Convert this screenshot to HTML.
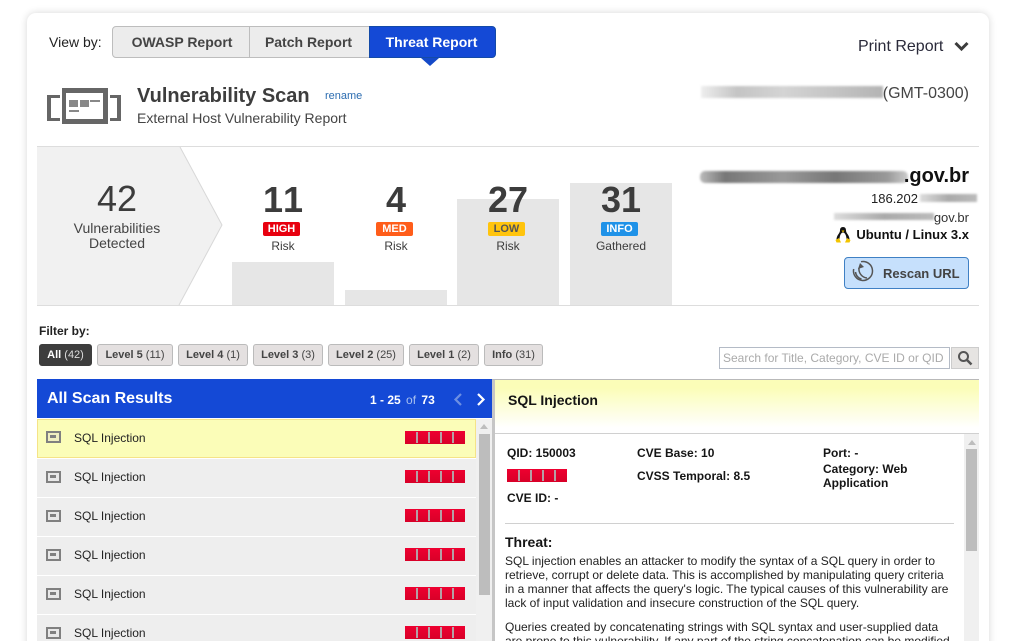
<!DOCTYPE html>
<html><head><meta charset="utf-8">
<style>
*{box-sizing:border-box}
html,body{margin:0;padding:0;width:1028px;height:641px;overflow:hidden;background:#fff;font-family:"Liberation Sans",sans-serif;color:#3c3c3c}
#wrap{position:relative;width:1028px;height:641px;overflow:hidden;background:#fff}
.a{position:absolute}
.t{position:absolute;white-space:nowrap;line-height:14px}
#card{left:27px;top:13px;width:962px;height:660px;background:#fff;border-radius:9px;box-shadow:0 0 8px rgba(0,0,0,.16)}
.tab{position:absolute;top:26px;height:32px;line-height:30px;text-align:center;font-weight:bold;font-size:14px;background:#ececec;border:1px solid #bdbdbd;color:#444}
.num{position:absolute;font-weight:bold;font-size:36px;line-height:40px;width:100px;text-align:center;top:180px;font-kerning:none}
.badge{position:absolute;top:222px;width:37px;height:14px;border-radius:2px;font-size:11px;font-weight:bold;line-height:14px;text-align:center;color:#fff}
.lbl{position:absolute;top:239px;width:100px;text-align:center;font-size:12px;line-height:14px}
.bar{position:absolute;background:#e6e6e6}
.pill{position:absolute;top:344px;height:22px;line-height:20px;border:1px solid #bbb;border-radius:3px;background:#e4e0e0;font-size:11px;text-align:center;color:#444}
.pill b{font-weight:bold}
.row{position:absolute;left:37px;width:439px;height:38px;background:#eeeeee}
.row span{position:absolute;left:37px;top:11px;font-size:12px;line-height:14px;color:#222}
.ic{position:absolute;left:9px;top:12px;width:15px;height:12px;background:#e8e8e8;border:2px solid #808080}
.ic:after{content:"";position:absolute;left:2px;top:2px;width:6px;height:3px;background:#808080}
.rb{position:absolute;width:60px;height:13px;background:linear-gradient(#ee0030,#d80028)}
.rb i{position:absolute;top:1px;width:2px;height:11px;background:#b5a0a5}
.blur{position:absolute;filter:blur(1px)}
.det{position:absolute;font-size:12px;font-weight:bold;line-height:14px;color:#151515;white-space:nowrap}
p.x{position:absolute;left:505px;margin:0;font-size:12px;line-height:14px;color:#222;white-space:nowrap}
</style></head><body>
<div id="wrap">
<div id="card" class="a"></div>

<div class="t" style="left:49px;top:35px;font-size:14px;color:#222">View by:</div>
<div class="tab" style="left:112px;width:138px;border-radius:4px 0 0 4px;text-indent:2px">OWASP Report</div>
<div class="tab" style="left:249px;width:121px;border-left:1px solid #bdbdbd;text-indent:-2px">Patch Report</div>
<div class="tab" style="left:369px;width:127px;background:#1449d6;border-color:#134aa8;color:#fff;border-radius:0 4px 4px 0;text-indent:-2px">Threat Report</div>
<div class="a" style="left:421px;top:58px;width:0;height:0;border-left:9px solid transparent;border-right:9px solid transparent;border-top:8px solid #1449c8"></div>

<svg class="a" style="left:47px;top:88px" width="74" height="36" viewBox="0 0 74 36">
<path d="M0 7h13v3H4v20h9v3H0zM74 7H63v3h7v20h-7v3h11z" fill="#666"/>
<rect x="15" y="0" width="46" height="36" fill="#666"/>
<rect x="19" y="5" width="37" height="26" fill="#fff"/>
<path d="M22 12h9v7h-9zM33 12h9v7h-9zM43 12h10v2H43zM22 22h10v2H22z" fill="#888"/>
</svg>

<div class="t" style="left:137px;top:85px;font-size:20px;line-height:23px;font-weight:bold;color:#3d3d3d">Vulnerability Scan</div>
<div class="t" style="left:325px;top:89px;font-size:11px;color:#2b6cb0">rename</div>
<div class="t" style="left:137px;top:111px;font-size:14px;line-height:15px;color:#444">External Host Vulnerability Report</div>

<div class="t" style="left:858px;top:38px;font-size:16px;line-height:18px;color:#2a2a3a">Print Report</div>
<svg class="a" style="left:954px;top:41px" width="15" height="11" viewBox="0 0 15 11"><path d="M1.500 2l6 6 6-6" fill="none" stroke="#3c3c3c" stroke-width="3"/></svg>

<div class="blur" style="left:701px;top:86px;width:182px;height:12px;background:linear-gradient(90deg,#eee,#c4c4c4 20%,#d4d4d4 45%,#c6c6c6 70%,#b4b4b4)"></div>
<div class="t" style="right:59px;top:85px;font-size:16px;line-height:18px;color:#444">(GMT-0300)</div>

<div class="a" style="left:37px;top:146px;width:942px;height:1px;background:#ddd"></div>
<svg class="a" style="left:37px;top:147px" width="190" height="159"><path d="M0 0H143L185 78 142 158H0z" fill="#f1f1f1"/><path d="M143 0L185 78 142 158" fill="none" stroke="#d8d8d8"/></svg>
<div class="t" style="left:67px;top:179px;width:100px;text-align:center;font-size:36px;line-height:40px;color:#3c3c3c">42</div>
<div class="t" style="left:57px;top:221px;width:120px;text-align:center;font-size:14px;line-height:15px;color:#444">Vulnerabilities<br>Detected</div>

<div class="bar" style="left:232px;top:262px;width:102px;height:43px"></div>
<div class="bar" style="left:345px;top:290px;width:102px;height:15px"></div>
<div class="bar" style="left:457px;top:199px;width:102px;height:106px"></div>
<div class="bar" style="left:570px;top:183px;width:102px;height:122px"></div>

<div class="num" style="left:233px">11</div>
<div class="num" style="left:346px">4</div>
<div class="num" style="left:458px">27</div>
<div class="num" style="left:571px">31</div>
<div class="badge" style="left:263px;background:#e8000f">HIGH</div>
<div class="badge" style="left:376px;background:#ff5d1a">MED</div>
<div class="badge" style="left:488px;background:#ffc40d;color:#555">LOW</div>
<div class="badge" style="left:601px;background:#1f92e8">INFO</div>
<div class="lbl" style="left:233px">Risk</div>
<div class="lbl" style="left:346px">Risk</div>
<div class="lbl" style="left:458px">Risk</div>
<div class="lbl" style="left:571px">Gathered</div>
<div class="a" style="left:37px;top:305px;width:942px;height:1px;background:#ddd"></div>

<div class="blur" style="left:700px;top:171px;width:208px;height:12px;background:linear-gradient(90deg,#bbb,#777 12%,#999 40%,#777 65%,#999 90%,#ccc);border-radius:5px"></div>
<div class="t" style="right:59px;top:165px;font-size:20px;line-height:23px;font-weight:bold;color:#111">.gov.br</div>
<div class="t" style="left:871px;top:191px;font-size:13px;line-height:15px;color:#222">186.202</div>
<div class="blur" style="left:920px;top:194px;width:57px;height:8px;background:linear-gradient(90deg,#ddd,#aaa,#bbb)"></div>
<div class="blur" style="left:834px;top:213px;width:100px;height:7px;background:linear-gradient(90deg,#ddd,#aaa,#bbb)"></div>
<div class="t" style="right:59px;top:210px;font-size:13px;line-height:15px;color:#333">gov.br</div>
<svg class="a" style="left:835px;top:226px" width="16" height="17" viewBox="0 0 16 17">
<path d="M8 1c2.200 0 3 1.600 3 3.500 0 1.500.8 2.500 1.800 4 1 1.500 1.700 3 1.700 5H1.500c0-2 .7-3.500 1.700-5 1-1.500 1.800-2.500 1.800-4C5 2.600 5.800 1 8 1z" fill="#111"/>
<path d="M8 6.500c1.800 0 3.500 3 3.500 7h-7c0-4 1.700-7 3.500-7z" fill="#fff"/>
<path d="M.5 14L4 12l2 4.500H1.500zM15.500 14L12 12l-2 4.500h4.500zM6.500 4.500h3L8 6.500z" fill="#f2c400"/>
</svg>
<div class="t" style="right:59px;top:227px;font-size:13px;line-height:15px;font-weight:bold;color:#111">Ubuntu / Linux 3.x</div>

<div class="a" style="left:844px;top:257px;width:125px;height:32px;background:#c6e0fc;border:1px solid #3f80c4;border-radius:4px"></div>
<svg class="a" style="left:852px;top:260px" width="23" height="23" viewBox="0 0 23 23" fill="none" stroke="#555" stroke-width="1.500">
<path d="M9 1.700A9.500 9.500 0 1 1 1.700 9"/><path d="M7 8a9 9 0 0 0 8 10"/><path d="M3.500 12a8 8 0 0 0 6 7"/><path d="M6 9l2-6 4 4z" fill="#555" stroke="none"/>
</svg>
<div class="t" style="left:883px;top:266px;font-size:13px;line-height:15px;font-weight:bold;color:#444">Rescan URL</div>

<div class="t" style="left:39px;top:324px;font-size:12px;font-weight:bold;color:#222">Filter by:</div>
<div class="pill" style="left:39px;width:53px;background:#3d3d3d;border-color:#3d3d3d;color:#ddd"><b style="color:#fff">All</b> (42)</div>
<div class="pill" style="left:97px;width:76px"><b>Level 5</b> (11)</div>
<div class="pill" style="left:178px;width:70px"><b>Level 4</b> (1)</div>
<div class="pill" style="left:253px;width:70px"><b>Level 3</b> (3)</div>
<div class="pill" style="left:328px;width:76px"><b>Level 2</b> (25)</div>
<div class="pill" style="left:409px;width:70px"><b>Level 1</b> (2)</div>
<div class="pill" style="left:484px;width:59px"><b>Info</b> (31)</div>

<div class="a" style="left:719px;top:347px;width:231px;height:22px;border:1px solid #b4bbc6;background:#fff;padding-left:3px;font-size:12px;line-height:20px;color:#aaa;white-space:nowrap">Search for Title, Category, CVE ID or QID</div>
<div class="a" style="left:951px;top:347px;width:28px;height:22px;background:#e6e4e2;border:1px solid #ccc"></div>
<svg class="a" style="left:957px;top:350px" width="16" height="16" viewBox="0 0 16 16" fill="none" stroke="#555"><circle cx="6.500" cy="6.500" r="4.500" stroke-width="2"/><path d="M10 10l4.500 4.500" stroke-width="2.500"/></svg>

<div class="a" style="left:37px;top:379px;width:942px;height:1px;background:#b9b9b9"></div>
<div class="a" style="left:37px;top:379px;width:455px;height:39px;background:#1449d6"></div>
<div class="t" style="left:47px;top:389px;font-size:16px;line-height:19px;font-weight:bold;color:#fff">All Scan Results</div>
<div class="t" style="left:370px;top:393px;font-size:12px;color:#fff"><b>1 - 25</b> <span style="color:#a9c1ef;margin:0 2px">of</span> <b>73</b></div>
<svg class="a" style="left:452px;top:392px" width="36" height="15" viewBox="0 0 36 15" fill="none" stroke-width="2.200"><path d="M9 2L3.500 7.500 9 13" stroke="#6d8fe2"/><path d="M26 2l5.500 5.500L26 13" stroke="#fff"/></svg>

<div class="a" style="left:492px;top:380px;width:3px;height:261px;background:#c6c6c6"></div>
<div class="a" style="left:495px;top:380px;width:484px;height:53px;background:linear-gradient(#fbfdb8 15%,#fff 90%)"></div>
<div class="a" style="left:495px;top:433px;width:484px;height:1px;background:#d0d0d0"></div>
<div class="t" style="left:508px;top:393px;font-size:14px;font-weight:bold;color:#151515">SQL Injection</div>

<div class="row" style="top:419px;height:39px;background:#fbfdb8;border:1px solid #f5e388"><div class="ic" style="left:8px;top:11px;background:#f0efc0"></div><span style="left:36px;top:11px">SQL Injection</span></div>
<div class="row" style="top:459px"><div class="ic"></div><span>SQL Injection</span></div>
<div class="row" style="top:498px"><div class="ic"></div><span>SQL Injection</span></div>
<div class="row" style="top:537px"><div class="ic"></div><span>SQL Injection</span></div>
<div class="row" style="top:576px"><div class="ic"></div><span>SQL Injection</span></div>
<div class="row" style="top:615px;height:26px"><div class="ic"></div><span>SQL Injection</span></div>

<div class="rb" style="left:405px;top:431px"><i style="left:11px"></i><i style="left:23px"></i><i style="left:35px"></i><i style="left:47px"></i></div>
<div class="rb" style="left:405px;top:470px"><i style="left:11px"></i><i style="left:23px"></i><i style="left:35px"></i><i style="left:47px"></i></div>
<div class="rb" style="left:405px;top:509px"><i style="left:11px"></i><i style="left:23px"></i><i style="left:35px"></i><i style="left:47px"></i></div>
<div class="rb" style="left:405px;top:548px"><i style="left:11px"></i><i style="left:23px"></i><i style="left:35px"></i><i style="left:47px"></i></div>
<div class="rb" style="left:405px;top:587px"><i style="left:11px"></i><i style="left:23px"></i><i style="left:35px"></i><i style="left:47px"></i></div>
<div class="rb" style="left:405px;top:626px"><i style="left:11px"></i><i style="left:23px"></i><i style="left:35px"></i><i style="left:47px"></i></div>

<div class="a" style="left:476px;top:419px;width:16px;height:222px;background:#f0f0f0"></div>
<div class="a" style="left:480px;top:424px;width:0;height:0;border-left:4px solid transparent;border-right:4px solid transparent;border-bottom:5px solid #bdbdbd"></div>
<div class="a" style="left:479px;top:434px;width:11px;height:161px;background:#bdbdbd"></div>

<div class="det" style="left:507px;top:446px">QID: 150003</div>
<div class="rb" style="left:507px;top:469px"><i style="left:11px"></i><i style="left:23px"></i><i style="left:35px"></i><i style="left:47px"></i></div>
<div class="det" style="left:507px;top:491px">CVE ID: -</div>
<div class="det" style="left:637px;top:446px">CVE Base: 10</div>
<div class="det" style="left:637px;top:469px">CVSS Temporal: 8.5</div>
<div class="det" style="left:823px;top:446px">Port: -</div>
<div class="det" style="left:823px;top:462px">Category: Web<br>Application</div>
<div class="a" style="left:505px;top:523px;width:449px;height:1px;background:#d0d0d0"></div>
<div class="t" style="left:505px;top:535px;font-size:14px;font-weight:bold;color:#151515">Threat:</div>
<p class="x" style="top:554px">SQL injection enables an attacker to modify the syntax of a SQL query in order to<br>retrieve, corrupt or delete data. This is accomplished by manipulating query criteria<br>in a manner that affects the query's logic. The typical causes of this vulnerability are<br>lack of input validation and insecure construction of the SQL query.</p>
<p class="x" style="top:620px">Queries created by concatenating strings with SQL syntax and user-supplied data<br>are prone to this vulnerability. If any part of the string concatenation can be modified</p>

<div class="a" style="left:964px;top:434px;width:15px;height:207px;background:#f0f0f0"></div>
<div class="a" style="left:968px;top:440px;width:0;height:0;border-left:4px solid transparent;border-right:4px solid transparent;border-bottom:5px solid #bdbdbd"></div>
<div class="a" style="left:966px;top:449px;width:11px;height:102px;background:#bdbdbd"></div>
</div>
</body></html>
